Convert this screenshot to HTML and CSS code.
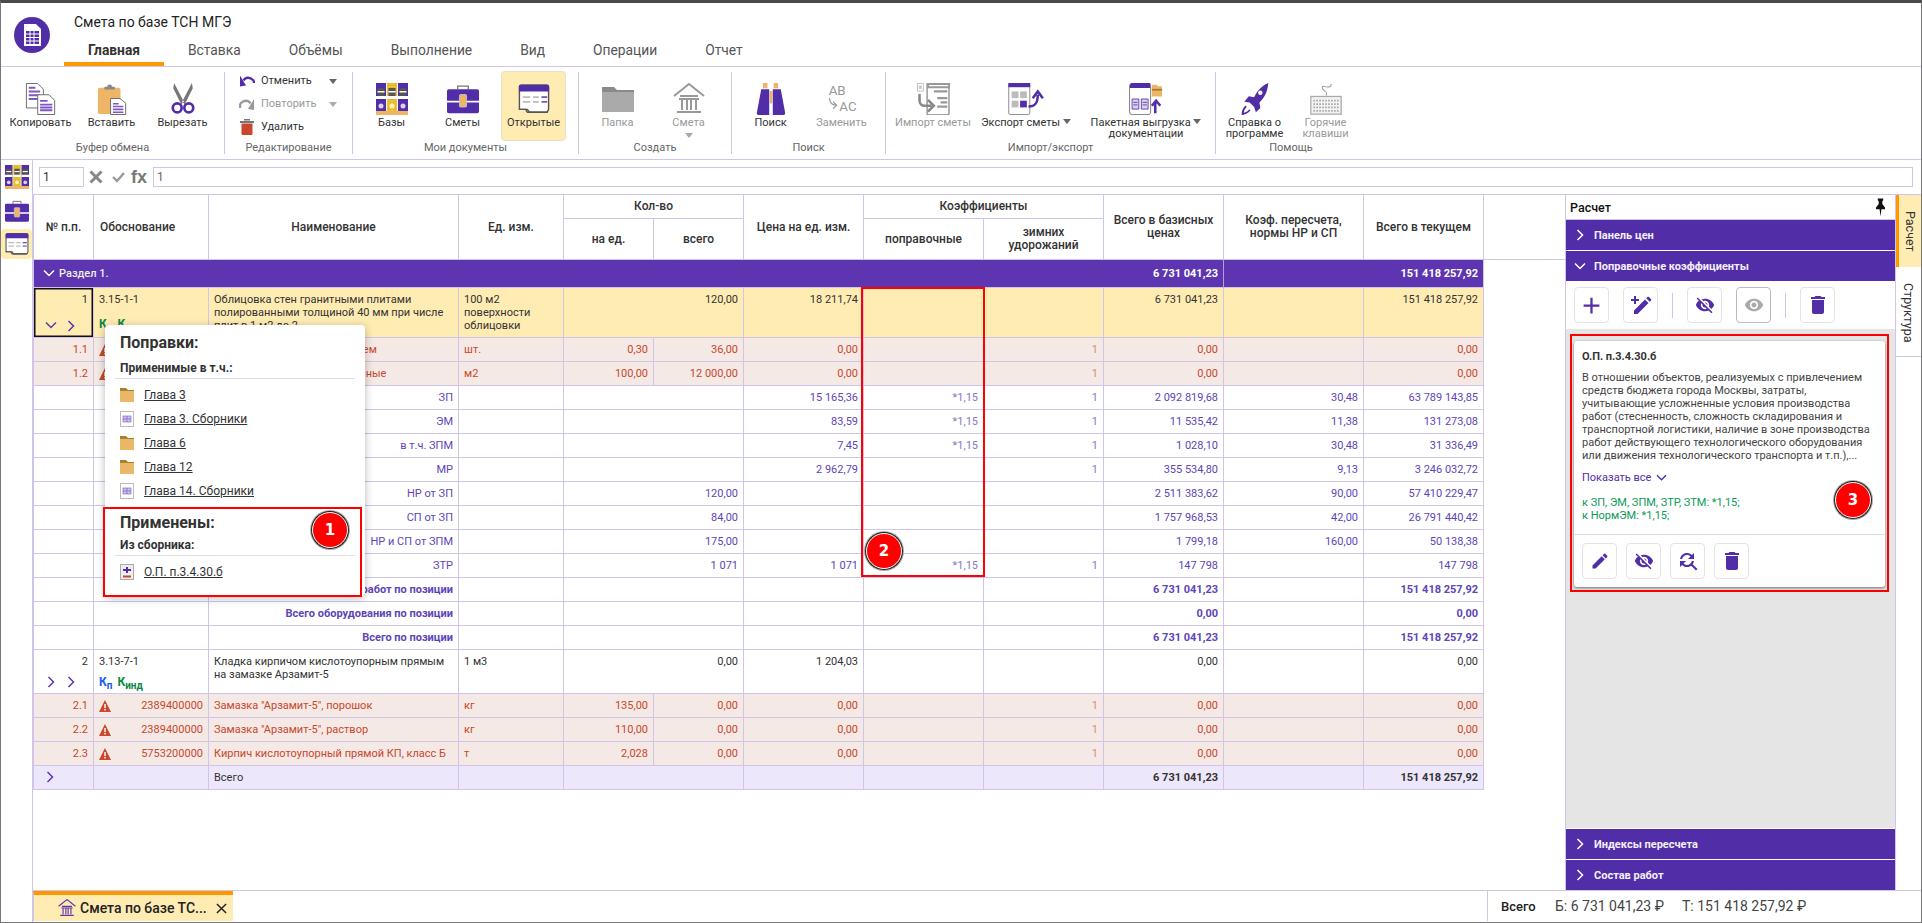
FILE: index.html
```html
<!DOCTYPE html>
<html lang="ru">
<head>
<meta charset="utf-8">
<title>Смета по базе ТСН МГЭ</title>
<link rel="stylesheet" href="styles.css">
</head>
<body>
<svg class="defs" width="0" height="0" aria-hidden="true">
  <symbol id="i-books" viewBox="0 0 32 32">
    <rect x="0" y="0" width="10" height="28" fill="#512da8"/><rect x="11" y="0" width="10" height="28" fill="#e9bd2c"/><rect x="22" y="0" width="10" height="28" fill="#512da8"/>
    <rect x="1.500" y="5" width="7" height="8" fill="#555"/><rect x="12.500" y="5" width="7" height="8" fill="#555"/><rect x="23.500" y="5" width="7" height="8" fill="#555"/>
    <rect x="1.500" y="8" width="7" height="1.500" fill="#fff"/><rect x="12.500" y="8" width="7" height="1.500" fill="#fff"/><rect x="23.500" y="8" width="7" height="1.500" fill="#fff"/>
    <rect x="0" y="13" width="10" height="3" fill="#fff"/><rect x="11" y="13" width="10" height="3" fill="#fff"/><rect x="22" y="13" width="10" height="3" fill="#fff"/>
    <circle cx="5" cy="23" r="2.500" fill="#d9d2ea"/><circle cx="16" cy="23" r="2.500" fill="#fff2c0"/><circle cx="27" cy="23" r="2.500" fill="#d9d2ea"/>
    <rect x="0" y="28" width="32" height="4" fill="#eeb566"/>
  </symbol>
  <symbol id="i-case" viewBox="0 0 36 32">
    <path d="M12 5V1.500h12V5" fill="none" stroke="#777" stroke-width="1.500"/>
    <path d="M2 5h32a2 2 0 0 1 2 2v11H0V7a2 2 0 0 1 2-2zM0 20h36v10a2 2 0 0 1-2 2H2a2 2 0 0 1-2-2z" fill="#512da8"/>
    <rect x="14" y="11" width="8" height="14" rx="1" fill="#eeb566" stroke="#c8c0e0"/>
  </symbol>
  <symbol id="i-open" viewBox="0 0 34 32">
    <path d="M1.500 27V3a2 2 0 0 1 2-2h27a2 2 0 0 1 2 2v24l-1.500 3H10l-2-3z" fill="#fff" stroke="#555" stroke-width="1.500"/>
    <path d="M1 3a2 2 0 0 1 2-2h28a2 2 0 0 1 2 2v5H1z" fill="#512da8"/>
    <path d="M5 14h8M16 14h6M25 14h6M5 19h8M16 19h6" stroke="#bbb" stroke-width="2"/><path d="M25 19h6M25 14h6" stroke="#7e57c2" stroke-width="2"/>
    <path d="M1 27h9l2 3h19" fill="none" stroke="#555" stroke-width="1.500"/>
  </symbol>
  <symbol id="i-copy" viewBox="0 0 32 34">
    <path d="M.500.500h12l6 6v20H.500z" fill="#fff" stroke="#666"/><path d="M3 5h7M3 9h12M3 13h12M3 17h12" stroke="#7e57c2" stroke-width="2"/>
    <path d="M12.500 12.500h12l6 6v15h-18z" fill="#fff" stroke="#666"/><path d="M15 19h8M15 23h13M15 26h13M15 29h13" stroke="#7e57c2" stroke-width="2"/>
  </symbol>
  <symbol id="i-paste" viewBox="0 0 30 34">
    <rect x="0" y="5" width="24" height="28" rx="2" fill="#eeb566"/><path d="M7 7V4h3a2.500 2.500 0 0 1 5 0h3v3z" fill="#888"/>
    <path d="M13.500 16.500h10l6 5v12h-16z" fill="#fff" stroke="#666"/><path d="M16 22h6M16 25h11M16 28h11M16 31h11" stroke="#7e57c2" stroke-width="1.700"/>
  </symbol>
  <symbol id="i-cut" viewBox="0 0 26 36">
    <path d="M3 0l11 21-3 3L2 6zM23 0L12 21l3 3 9-18z" fill="#777"/>
    <circle cx="6.500" cy="28" r="5" fill="none" stroke="#512da8" stroke-width="3"/><circle cx="19.500" cy="28" r="5" fill="none" stroke="#512da8" stroke-width="3"/>
  </symbol>
  <symbol id="i-undo" viewBox="0 0 16 16"><path d="M4.500 7.500C6.500 4 11 4 14 7c1 1 1 2 1 3" fill="none" stroke="currentColor" stroke-width="2.400"/><path d="M1 2.500v11l6-1z" fill="currentColor"/></symbol>
  <symbol id="i-redo" viewBox="0 0 16 16"><path d="M11.500 7.500C9.500 4 5 4 2 7c-1 1-1 2-1 3v2" fill="none" stroke="currentColor" stroke-width="2.400"/><path d="M15 3v11l-6-1z" fill="currentColor"/></symbol>
  <symbol id="i-bin" viewBox="0 0 14 16"><path d="M0 2h14v2H0zM4 0h6v1.500H4z" fill="#777"/><path d="M1.500 4.500h11V15a1 1 0 0 1-1 1h-9a1 1 0 0 1-1-1z" fill="#c9472c"/></symbol>
  <symbol id="i-folder" viewBox="0 0 32 32"><path d="M0 4h12l3 3h17v4H0z" fill="#8a8a8a"/><path d="M0 9h32v20H0z" fill="#aaa"/></symbol>
  <symbol id="i-house" viewBox="0 0 32 32" >
    <path d="M1 13L16 1l15 12" fill="none" stroke="currentColor" stroke-width="2"/><path d="M7 13h18M6 16h20M9 16v11M14 16v11M18 16v11M23 16v11M4 29h24" fill="none" stroke="currentColor" stroke-width="2"/>
  </symbol>
  <symbol id="i-binoc" viewBox="0 0 32 36">
    <rect x="7" y="0" width="5" height="6" fill="#eeb566"/><rect x="19" y="0" width="5" height="6" fill="#eeb566"/>
    <rect x="14.500" y="9" width="3" height="14" fill="#eeb566"/>
    <path d="M5 7h9v29H2a2 2 0 0 1-2-2zM18 7h9l5 27a2 2 0 0 1-2 2H18z" fill="#512da8"/>
  </symbol>
  <symbol id="i-import" viewBox="0 0 38 38">
    <rect x="0.500" y="0.500" width="7" height="9" fill="#fff" stroke="#bbb"/><rect x="2" y="3" width="4" height="4" fill="#ccc"/>
    <path d="M12 1h24a2 2 0 0 1 2 2v33a2 2 0 0 1-2 2H12z" fill="#fff" stroke="#888" stroke-width="1.500"/>
    <path d="M13 1h25v4H13zM20 10h16M24 18h12M28 23h8M24 28h12" stroke="#999" stroke-width="2.500" fill="none"/>
    <path d="M3 13v8a6 6 0 0 0 6 6h8M13 20l7 7-7 7" fill="none" stroke="#888" stroke-width="3"/>
  </symbol>
  <symbol id="i-export" viewBox="0 0 42 38">
    <rect x="0.500" y="0.500" width="25" height="37" rx="2" fill="#fff" stroke="#777"/><rect x="0" y="0" width="26" height="5" fill="#512da8"/>
    <rect x="4" y="10" width="8" height="8" fill="#bbb"/><rect x="14" y="10" width="8" height="8" fill="#bbb"/><rect x="4" y="21" width="8" height="8" fill="#bbb"/><rect x="14" y="21" width="8" height="8" fill="#512da8"/>
    <path d="M24 28c8 0 11-4 11-14M29 18l6-8 6 8" fill="none" stroke="#512da8" stroke-width="3"/>
  </symbol>
  <symbol id="i-batch" viewBox="0 0 40 38">
    <rect x="0.500" y="0.500" width="25" height="37" rx="3" fill="#fff" stroke="#666"/><path d="M1 3a3 3 0 0 1 3-3h21v6H1z" fill="#512da8"/>
    <path d="M3.500 19h8v12h-8zM14.500 19h8v12h-8z" fill="#d9d2ea" stroke="#512da8"/><path d="M5 23h5M5 26h5M16 23h5M16 26h5" stroke="#512da8"/>
    <path d="M27 2h6l1 2h5v12H27z" fill="#eeb566"/><rect x="27" y="7" width="12" height="2" fill="#9a7b3a"/>
    <path d="M31 36V23M27 27l5-6 5 6" fill="none" stroke="#512da8" stroke-width="3"/>
  </symbol>
  <symbol id="i-rocket" viewBox="0 0 32 36">
    <path d="M31 0c-1 9-3 15-10 22l1 6-5 5-2-6-5-5-6-1 5-6 6 1C19 8 24 3 31 0z" fill="#512da8"/>
    <circle cx="22" cy="11" r="2.500" fill="#fff"/><path d="M6 26c-2 2-4 4-4 9 3-1 7-2 8-5" fill="none" stroke="#512da8" stroke-width="2"/>
  </symbol>
  <symbol id="i-keys" viewBox="0 0 38 38">
    <path d="M25 1c1 5-5 4-9 3-3 0-1 4 2 6 2 1 2 3 1 5" fill="none" stroke="#999" stroke-width="1.200"/>
    <rect x="1" y="16" width="36" height="21" fill="#f3f3f3" stroke="#aaa" stroke-width="1.500"/>
    <path d="M4 21h30M4 25h30M4 29h30M4 33h30" stroke="#aaa" stroke-width="2" stroke-dasharray="2 1.500" fill="none"/>
  </symbol>
  <symbol id="i-warn" viewBox="0 0 12 12"><path d="M6 0l6 12H0z" fill="#c9472c"/><path d="M5.300 4h1.400v4.200H5.300zM5.300 9h1.400v1.400H5.300z" fill="#fff"/></symbol>
  <symbol id="i-yfolder" viewBox="0 0 14 14"><path d="M0 0h6l2 2h6v2H0z" fill="#a9812f"/><path d="M0 3h14v11H0z" fill="#e9b765"/></symbol>
  <symbol id="i-sheet" viewBox="0 0 14 16"><rect x=".5" y=".5" width="13" height="15" fill="#fff" stroke="#bbb"/><rect x="3" y="5" width="8" height="6" fill="#c9c0ea" stroke="#7e57c2" stroke-width=".6"/><path d="M3 8h8M7 5v6" stroke="#7e57c2" stroke-width=".6"/></symbol>
  <symbol id="i-plusminus" viewBox="0 0 14 16"><rect x=".5" y=".5" width="13" height="15" fill="#eee" stroke="#aaa"/><path d="M3 6h8M7 3v6" stroke="#512da8" stroke-width="2"/><path d="M3 12.500h8" stroke="#c9472c" stroke-width="2"/></symbol>
  <symbol id="m-add" viewBox="0 0 24 24"><path d="M19 13h-6v6h-2v-6H5v-2h6V5h2v6h6v2z"/></symbol>
  <symbol id="m-edit" viewBox="0 0 24 24"><path d="M3 17.250V21h3.750L17.810 9.940l-3.750-3.750L3 17.250zM20.710 7.040c.39-.39.39-1.020 0-1.410l-2.340-2.340c-.39-.39-1.020-.39-1.410 0l-1.830 1.830 3.750 3.750 1.830-1.830z"/></symbol>
  <symbol id="m-wand" viewBox="0 0 24 24"><path d="M5 21v-3.500L16 6.500 19.500 10 8.500 21zM20.700 8.800L17.200 5.300l1.300-1.300c.4-.4 1-.4 1.400 0l2.100 2.100c.4.4.4 1 0 1.400zM5 3h2v3h3v2H7v3H5V8H2V6h3z"/></symbol>
  <symbol id="m-del" viewBox="0 0 24 24"><path d="M6 19c0 1.100.9 2 2 2h8c1.100 0 2-.9 2-2V7H6v12zM19 4h-3.500l-1-1h-5l-1 1H5v2h14V4z"/></symbol>
  <symbol id="m-eye" viewBox="0 0 24 24"><path d="M12 4.500C7 4.500 2.730 7.610 1 12c1.730 4.390 6 7.500 11 7.500s9.270-3.110 11-7.500c-1.730-4.390-6-7.500-11-7.500zM12 17c-2.760 0-5-2.240-5-5s2.240-5 5-5 5 2.240 5 5-2.240 5-5 5zm0-8c-1.660 0-3 1.340-3 3s1.340 3 3 3 3-1.340 3-3-1.340-3-3-3z"/></symbol>
  <symbol id="m-eyeoff" viewBox="0 0 24 24"><path d="M12 7c2.760 0 5 2.240 5 5 0 .65-.13 1.260-.36 1.830l2.920 2.920c1.510-1.260 2.700-2.890 3.430-4.750-1.730-4.390-6-7.500-11-7.500-1.400 0-2.740.25-3.980.7l2.160 2.160C10.740 7.130 11.350 7 12 7zM2 4.270l2.280 2.280.46.46C3.080 8.300 1.780 10.020 1 12c1.730 4.390 6 7.500 11 7.500 1.550 0 3.030-.3 4.380-.84l.42.42L19.730 22 21 20.730 3.270 3 2 4.270zM7.530 9.800l1.550 1.550c-.05.21-.08.43-.08.65 0 1.660 1.340 3 3 3 .22 0 .44-.03.65-.08l1.550 1.550c-.67.33-1.410.53-2.200.53-2.760 0-5-2.240-5-5 0-.79.2-1.530.53-2.200zm4.310-.78l3.150 3.150.02-.16c0-1.660-1.340-3-3-3l-.17.01z"/></symbol>
  <symbol id="m-find" viewBox="0 0 24 24"><path d="M11 6c1.380 0 2.630.56 3.540 1.460L12 10h6V4l-2.050 2.050C14.680 4.780 12.930 4 11 4c-3.530 0-6.430 2.610-6.920 6H6.100c.46-2.280 2.480-4 4.900-4zm5.640 9.140c.66-.9 1.120-1.970 1.280-3.140H15.900c-.46 2.280-2.480 4-4.900 4-1.380 0-2.630-.56-3.540-1.460L10 12H4v6l2.050-2.050C7.320 17.220 9.070 18 11 18c1.550 0 2.980-.51 4.140-1.360L20 21.490 21.490 20l-4.850-4.860z"/></symbol>
  <symbol id="c-right" viewBox="0 0 10 12"><path d="M2.500 1l5 5-5 5" fill="none" stroke="currentColor" stroke-width="1.500"/></symbol>
  <symbol id="c-down" viewBox="0 0 12 10"><path d="M1 2.500l5 5 5-5" fill="none" stroke="currentColor" stroke-width="1.500"/></symbol>
</svg>

<div class="app">
  <header class="head">
    <div class="logo">
      <svg width="36" height="36" viewBox="0 0 36 36"><circle cx="18" cy="18" r="18" fill="#512da8"/><path d="M10 7h12l5 5v17H10z" fill="#fff"/><path d="M12 14h13v13H12z" fill="#512da8"/><path d="M12 17h13M12 20.500h13M12 24h13M16 14v13M20 14v13" stroke="#fff"/></svg>
    </div>
    <div class="head-main">
      <div class="doc-title">Смета по базе ТСН МГЭ</div>
      <nav class="tabs">
        <a class="tab tab-on">Главная</a><a class="tab">Вставка</a><a class="tab">Объёмы</a><a class="tab">Выполнение</a><a class="tab">Вид</a><a class="tab">Операции</a><a class="tab">Отчет</a>
      </nav>
    </div>
  </header>

  <section class="ribbon">
    <div class="grp g-clip">
      <div class="btns">
        <div class="btn"><svg class="ic"><use href="#i-copy"/></svg><span>Копировать</span></div>
        <div class="btn"><svg class="ic"><use href="#i-paste"/></svg><span>Вставить</span></div>
        <div class="btn"><svg class="ic"><use href="#i-cut"/></svg><span>Вырезать</span></div>
      </div>
      <div class="grp-label">Буфер обмена</div>
    </div>
    <div class="grp g-edit">
      <div class="rows">
        <div class="row-btn"><svg class="ic-s purple"><use href="#i-undo"/></svg><span>Отменить</span><i class="caret"></i></div>
        <div class="row-btn dim"><svg class="ic-s"><use href="#i-redo"/></svg><span>Повторить</span><i class="caret"></i></div>
        <div class="row-btn"><svg class="ic-s"><use href="#i-bin"/></svg><span>Удалить</span></div>
      </div>
      <div class="grp-label">Редактирование</div>
    </div>
    <div class="grp g-docs">
      <div class="btns">
        <div class="btn"><svg class="ic"><use href="#i-books"/></svg><span>Базы</span></div>
        <div class="btn"><svg class="ic"><use href="#i-case"/></svg><span>Сметы</span></div>
        <div class="btn btn-on"><svg class="ic"><use href="#i-open"/></svg><span>Открытые</span></div>
      </div>
      <div class="grp-label">Мои документы</div>
    </div>
    <div class="grp g-new">
      <div class="btns">
        <div class="btn dim"><svg class="ic"><use href="#i-folder"/></svg><span>Папка</span></div>
        <div class="btn dim"><svg class="ic house"><use href="#i-house"/></svg><span>Смета</span><i class="caret"></i></div>
      </div>
      <div class="grp-label">Создать</div>
    </div>
    <div class="grp g-find">
      <div class="btns">
        <div class="btn"><svg class="ic"><use href="#i-binoc"/></svg><span>Поиск</span></div>
        <div class="btn dim"><svg class="ic" viewBox="0 0 36 36"><text class="ab" x="3" y="14">AB</text><text class="ab" x="15" y="31">AC</text><path d="M4 17c0 5 2 8 8 8M8 21l4 4-4 4" fill="none" stroke="#999" stroke-width="1.300"/></svg><span>Заменить</span></div>
      </div>
      <div class="grp-label">Поиск</div>
    </div>
    <div class="grp g-io">
      <div class="btns">
        <div class="btn b-imp dim"><svg class="ic ic-wide"><use href="#i-import"/></svg><span>Импорт сметы</span></div>
        <div class="btn b-exp"><svg class="ic ic-wide"><use href="#i-export"/></svg><span>Экспорт сметы <i class="caret"></i></span></div>
        <div class="btn b-batch"><svg class="ic ic-wide"><use href="#i-batch"/></svg><span>Пакетная выгрузка <i class="caret"></i><br>документации</span></div>
      </div>
      <div class="grp-label">Импорт/экспорт</div>
    </div>
    <div class="grp g-help">
      <div class="btns">
        <div class="btn"><svg class="ic"><use href="#i-rocket"/></svg><span>Справка о<br>программе</span></div>
        <div class="btn dim"><svg class="ic"><use href="#i-keys"/></svg><span>Горячие<br>клавиши</span></div>
      </div>
      <div class="grp-label">Помощь</div>
    </div>
  </section>

  <div class="body">
    <aside class="rail">
      <svg class="rail-ic"><use href="#i-books"/></svg>
      <svg class="rail-ic"><use href="#i-case"/></svg>
      <div class="rail-on"><svg class="rail-ic"><use href="#i-open"/></svg></div>
    </aside>
    <div class="content">
      <div class="formula">
        <div class="f-name">1</div>
        <svg class="f-x" viewBox="0 0 14 14"><path d="M1.500 1.500l11 11M12.500 1.500l-11 11" stroke="#888" stroke-width="3"/></svg>
        <svg class="f-v" viewBox="0 0 14 14"><path d="M2 7l4 4 7-8" fill="none" stroke="#999" stroke-width="2.400"/></svg>
        <span class="f-fx">fx</span>
        <div class="f-val">1</div>
      </div>
      <div class="work">
        <div class="grid-wrap">
          <table class="grid">
            <colgroup>
              <col class="c61"><col class="c115"><col class="c250"><col class="c105"><col class="c90"><col class="c90"><col class="c120"><col class="c120"><col class="c120"><col class="c120"><col class="c140"><col class="c120">
            </colgroup>
            <thead>
              <tr class="h1">
                <th rowspan="2">№ п.п.</th><th rowspan="2" class="l">Обоснование</th><th rowspan="2">Наименование</th><th rowspan="2">Ед. изм.</th>
                <th colspan="2">Кол-во</th><th rowspan="2">Цена на ед. изм.</th><th colspan="2">Коэффициенты</th>
                <th rowspan="2">Всего в базисных ценах</th><th rowspan="2">Коэф. пересчета, нормы НР и СП</th><th rowspan="2">Всего в текущем</th>
              </tr>
              <tr class="h2"><th>на ед.</th><th>всего</th><th>поправочные</th><th>зимних удорожаний</th></tr>
            </thead>
            <tbody>
              <tr class="sec">
                <td colspan="9"><svg class="chev-d"><use href="#c-down"/></svg>Раздел 1.</td><td class="n">6 731 041,23</td><td class="n" colspan="2">151 418 257,92</td>
              </tr>
              <tr class="pos cur h50">
                <td class="sel n">1<div class="chevs"><svg class="chev-d"><use href="#c-down"/></svg><svg class="chev-r"><use href="#c-right"/></svg></div></td>
                <td>3.15-1-1<div class="ks"><b class="k-g">К<sub>п</sub></b><b class="k-g">К<sub>инд</sub></b></div></td>
                <td>Облицовка стен гранитными плитами полированными толщиной 40 мм при числе плит в 1 м2 до 2</td>
                <td>100 м2 поверхности облицовки</td><td class="n" colspan="2">120,00</td><td class="n">18 211,74</td><td></td><td></td><td class="n">6 731 041,23</td><td></td><td class="n">151 418 257,92</td>
              </tr>
              <tr class="res"><td class="n">1.1</td><td><div class="code"><svg class="warn"><use href="#i-warn"/></svg>1234500000</div></td><td>Анкер со стальным покрытием</td><td>шт.</td><td class="n">0,30</td><td class="n">36,00</td><td class="n">0,00</td><td></td><td class="n">1</td><td class="n">0,00</td><td></td><td class="n">0,00</td></tr>
              <tr class="res"><td class="n">1.2</td><td><div class="code"><svg class="warn"><use href="#i-warn"/></svg>1234500000</div></td><td>Плиты гранитные полированные</td><td>м2</td><td class="n">100,00</td><td class="n">12 000,00</td><td class="n">0,00</td><td></td><td class="n">1</td><td class="n">0,00</td><td></td><td class="n">0,00</td></tr>
              <tr class="sub"><td></td><td></td><td class="n">ЗП</td><td></td><td colspan="2"></td><td class="n">15 165,36</td><td class="n">*1,15</td><td class="n">1</td><td class="n">2 092 819,68</td><td class="n">30,48</td><td class="n">63 789 143,85</td></tr>
              <tr class="sub"><td></td><td></td><td class="n">ЭМ</td><td></td><td colspan="2"></td><td class="n">83,59</td><td class="n">*1,15</td><td class="n">1</td><td class="n">11 535,42</td><td class="n">11,38</td><td class="n">131 273,08</td></tr>
              <tr class="sub"><td></td><td></td><td class="n">в т.ч. ЗПМ</td><td></td><td colspan="2"></td><td class="n">7,45</td><td class="n">*1,15</td><td class="n">1</td><td class="n">1 028,10</td><td class="n">30,48</td><td class="n">31 336,49</td></tr>
              <tr class="sub"><td></td><td></td><td class="n">МР</td><td></td><td colspan="2"></td><td class="n">2 962,79</td><td></td><td class="n">1</td><td class="n">355 534,80</td><td class="n">9,13</td><td class="n">3 246 032,72</td></tr>
              <tr class="sub"><td></td><td></td><td class="n">НР от ЗП</td><td></td><td class="n" colspan="2">120,00</td><td></td><td></td><td></td><td class="n">2 511 383,62</td><td class="n">90,00</td><td class="n">57 410 229,47</td></tr>
              <tr class="sub"><td></td><td></td><td class="n">СП от ЗП</td><td></td><td class="n" colspan="2">84,00</td><td></td><td></td><td></td><td class="n">1 757 968,53</td><td class="n">42,00</td><td class="n">26 791 440,42</td></tr>
              <tr class="sub"><td></td><td></td><td class="n">НР и СП от ЗПМ</td><td></td><td class="n" colspan="2">175,00</td><td></td><td></td><td></td><td class="n">1 799,18</td><td class="n">160,00</td><td class="n">50 138,38</td></tr>
              <tr class="sub"><td></td><td></td><td class="n">ЗТР</td><td></td><td class="n" colspan="2">1 071</td><td class="n">1 071</td><td class="n">*1,15</td><td class="n">1</td><td class="n">147 798</td><td></td><td class="n">147 798</td></tr>
              <tr class="sub strong"><td></td><td></td><td class="n">Всего работ по позиции</td><td></td><td colspan="2"></td><td></td><td></td><td></td><td class="n">6 731 041,23</td><td></td><td class="n">151 418 257,92</td></tr>
              <tr class="sub strong"><td></td><td></td><td class="n">Всего оборудования по позиции</td><td></td><td colspan="2"></td><td></td><td></td><td></td><td class="n">0,00</td><td></td><td class="n">0,00</td></tr>
              <tr class="sub strong"><td></td><td></td><td class="n">Всего по позиции</td><td></td><td colspan="2"></td><td></td><td></td><td></td><td class="n">6 731 041,23</td><td></td><td class="n">151 418 257,92</td></tr>
              <tr class="pos h44">
                <td class="n">2<div class="chevs"><svg class="chev-r"><use href="#c-right"/></svg><svg class="chev-r"><use href="#c-right"/></svg></div></td>
                <td>3.13-7-1<div class="ks"><b class="k-b">К<sub>п</sub></b><b class="k-g">К<sub>инд</sub></b></div></td>
                <td>Кладка кирпичом кислотоупорным прямым на замазке Арзамит-5</td><td>1 м3</td><td class="n" colspan="2">0,00</td><td class="n">1 204,03</td><td></td><td></td><td class="n">0,00</td><td></td><td class="n">0,00</td>
              </tr>
              <tr class="res"><td class="n">2.1</td><td><div class="code"><svg class="warn"><use href="#i-warn"/></svg>2389400000</div></td><td>Замазка "Арзамит-5", порошок</td><td>кг</td><td class="n">135,00</td><td class="n">0,00</td><td class="n">0,00</td><td></td><td class="n">1</td><td class="n">0,00</td><td></td><td class="n">0,00</td></tr>
              <tr class="res"><td class="n">2.2</td><td><div class="code"><svg class="warn"><use href="#i-warn"/></svg>2389400000</div></td><td>Замазка "Арзамит-5", раствор</td><td>кг</td><td class="n">110,00</td><td class="n">0,00</td><td class="n">0,00</td><td></td><td class="n">1</td><td class="n">0,00</td><td></td><td class="n">0,00</td></tr>
              <tr class="res"><td class="n">2.3</td><td><div class="code"><svg class="warn"><use href="#i-warn"/></svg>5753200000</div></td><td>Кирпич кислотоупорный прямой КП, класс Б</td><td>т</td><td class="n">2,028</td><td class="n">0,00</td><td class="n">0,00</td><td></td><td class="n">1</td><td class="n">0,00</td><td></td><td class="n">0,00</td></tr>
              <tr class="tot">
                <td><svg class="chev-r tot-chev"><use href="#c-right"/></svg></td><td></td><td>Всего</td><td></td><td colspan="2"></td><td></td><td></td><td></td><td class="n b">6 731 041,23</td><td></td><td class="n b">151 418 257,92</td>
              </tr>
            </tbody>
          </table>
          <div class="grid-tail"></div>
        </div>

        <aside class="panel">
          <div class="panel-title"><span>Расчет</span>
            <svg class="pin" viewBox="0 0 10 20"><path d="M2 0h6v2L7 3v3l3 4v2H6l-1 8-1-8H0v-2l3-4V3L2 2z" fill="#111"/></svg>
          </div>
          <div class="acc"><svg class="acc-c"><use href="#c-right"/></svg>Панель цен</div>
          <div class="acc"><svg class="acc-c"><use href="#c-down"/></svg>Поправочные коэффициенты</div>
          <div class="tools">
            <div class="sq sq-lg"><svg><use href="#m-add"/></svg></div>
            <div class="sq"><svg><use href="#m-wand"/></svg></div>
            <i class="tool-sep"></i>
            <div class="sq sq-sm"><svg><use href="#m-eyeoff"/></svg></div>
            <div class="sq sq-on sq-sm"><svg><use href="#m-eye"/></svg></div>
            <i class="tool-sep"></i>
            <div class="sq"><svg><use href="#m-del"/></svg></div>
          </div>
          <div class="panel-body">
            <div class="mark-card">
              <article class="card">
                <div class="card-main">
                  <div class="card-title">О.П. п.3.4.30.б</div>
                  <p class="card-text">В отношении объектов, реализуемых с привлечением средств бюджета города Москвы, затраты, учитывающие усложненные условия производства работ (стесненность, сложность складирования и транспортной логистики, наличие в зоне производства работ действующего технологического оборудования или движения технологического транспорта и т.п.),...</p>
                  <div class="show-all">Показать все <svg class="show-c"><use href="#c-down"/></svg></div>
                  <div class="card-k">к ЗП, ЭМ, ЗПМ, ЗТР, ЗТМ: *1,15;<br>к НормЭМ: *1,15;</div>
                </div>
                <div class="card-acts">
                  <div class="sq sq-sm"><svg><use href="#m-edit"/></svg></div>
                  <div class="sq sq-sm"><svg><use href="#m-eyeoff"/></svg></div>
                  <div class="sq"><svg><use href="#m-find"/></svg></div>
                  <div class="sq"><svg><use href="#m-del"/></svg></div>
                </div>
              </article>
              <span class="badge badge-3">3</span>
            </div>
          </div>
          <div class="acc acc-gap"><svg class="acc-c"><use href="#c-right"/></svg>Индексы пересчета</div>
          <div class="acc acc-last"><svg class="acc-c"><use href="#c-right"/></svg>Состав работ</div>
        </aside>

        <div class="vtabs">
          <div class="vtab vtab-on"><span>Расчет</span></div>
          <div class="vtab"><span>Структура</span></div>
        </div>

        <div class="popup">
          <div class="pop-h">Поправки:</div>
          <div class="pop-sub">Применимые в т.ч.:</div>
          <ul class="pop-list">
            <li><svg class="pop-ic"><use href="#i-yfolder"/></svg><a>Глава 3</a></li>
            <li><svg class="pop-ic"><use href="#i-sheet"/></svg><a>Глава 3. Сборники</a></li>
            <li><svg class="pop-ic"><use href="#i-yfolder"/></svg><a>Глава 6</a></li>
            <li><svg class="pop-ic"><use href="#i-yfolder"/></svg><a>Глава 12</a></li>
            <li><svg class="pop-ic"><use href="#i-sheet"/></svg><a>Глава 14. Сборники</a></li>
          </ul>
          <div class="pop-h pop-h2">Применены:</div>
          <div class="pop-sub pop-sub2">Из сборника:</div>
          <ul class="pop-list">
            <li><svg class="pop-ic"><use href="#i-plusminus"/></svg><a>О.П. п.3.4.30.б</a></li>
          </ul>
        </div>
        <div class="mark mark-1"></div>
        <span class="badge badge-1">1</span>
        <div class="mark mark-2"></div>
        <span class="badge badge-2">2</span>
      </div>
      <footer class="foot">
        <div class="doc-tab">
          <svg class="doc-ic"><use href="#i-house"/></svg>
          <span>Смета по базе ТС...</span>
          <svg class="doc-x" viewBox="0 0 12 12"><path d="M1 1l10 10M11 1L1 11" stroke="#222" stroke-width="1.600"/></svg>
        </div>
        <div class="totals"><b>Всего</b><span class="t-b">Б: 6 731 041,23 ₽</span><span class="t-t">Т: 151 418 257,92 ₽</span></div>
      </footer>
    </div>
  </div>
</div>
</body>
</html>
```

FILE: styles.css
```css
* { box-sizing: border-box; }
html, body { margin: 0; height: 100%; overflow: hidden; background: #fff; }
body { font-family: Roboto, "Liberation Sans", sans-serif; font-size: 11px; color: #333; }
.defs { position: absolute; }
.app { width: 1922px; height: 923px; border: 1px solid #777; border-top: 3px solid #4a4a4a; display: flex; flex-direction: column; }

/* header */
.head { height: 63px; display: flex; flex: none; }
.logo { width: 63px; padding-top: 14px; padding-left: 13px; flex: none; }
.head-main { display: flex; flex-direction: column; }
.doc-title { padding: 12px 0 0 10px; font-size: 14px; line-height: 15px; color: #222; height: 32px; }
.tabs { display: flex; height: 31px; }
.tab { padding: 6px 24px 0; font-size: 13.800px; line-height: 18px; color: #555; border-bottom: 4px solid transparent; }
.tab-on { font-weight: 700; color: #333; border-bottom-color: #ff9800; }

/* ribbon */
.ribbon { height: 94px; flex: none; display: flex; border-top: 1px solid #d1c4e9; border-bottom: 1px solid #d1c4e9; padding: 5px 0 6px; }
.grp { height: 82px; border-right: 1px solid #d1c4e9; display: flex; flex-direction: column; flex: none; position: relative; }
.grp-label { position: absolute; left: 0; right: 0; bottom: 0; line-height: 13px; text-align: center; color: #666; }
.btns { display: flex; }
.btn { width: 71px; margin-top: -1px; height: 70px; padding-top: 11px; display: flex; flex-direction: column; align-items: center; text-align: center; line-height: 11px; color: #333; flex: none; border: 1px solid transparent; border-radius: 4px; }
.btn > span { margin-top: 2px; white-space: nowrap; }
.btn-on { background: #ffecb3; border-color: #e9dfc4; width: 65px; margin-left: 3px; }
.dim { color: #999; }
.ic { width: 32px; height: 32px; flex: none; }
.ic-wide { width: 38px; }
.house { color: #999; }
.ab { font-size: 15px; fill: #999; font-family: Roboto, sans-serif; }
.caret { display: inline-block; width: 0; height: 0; border: 4.500px solid transparent; border-top: 5px solid #666; border-bottom: 0; vertical-align: 2px; }
.dim .caret { border-top-color: #aaa; }
.btn > .caret { margin-top: 5px; }
.g-clip { width: 224px; padding-left: 4px; }
.g-edit { width: 128px; padding-left: 14px; }
.g-docs { width: 226px; padding-left: 3px; }
.g-new { width: 153px; padding-left: 3px; }
.g-find { width: 154px; padding-left: 3px; }
.g-io { width: 330px; padding-left: 3px; }
.b-imp { width: 88px; }
.b-exp { width: 98px; }
.b-batch { width: 130px; margin-left: 6px; }
.g-help { width: 150px; padding-left: 3px; border-right: 0; }
.rows { display: flex; flex-direction: column; gap: 5px; width: 98px; }
.row-btn { height: 18px; display: flex; align-items: center; line-height: 18px; }
.row-btn > span { flex: 1; }
.ic-s { width: 16px; height: 16px; margin-right: 6px; flex: none; }
.purple { color: #512da8; }
.dim .ic-s { color: #999; }

/* body */
.body { flex: 1; display: flex; min-height: 0; }
.rail { width: 32px; flex: none; border-right: 1px solid #d1c4e9; display: flex; flex-direction: column; align-items: center; padding-top: 4px; gap: 8px; }
.rail-ic { width: 24px; height: 26px; display: block; }
.rail-on { width: 31px; height: 30px; background: #ffecb3; border-radius: 4px; display: flex; align-items: center; justify-content: center; margin-top: -3px; }
.content { flex: 1; display: flex; flex-direction: column; min-width: 0; }

/* formula */
.formula { height: 35px; flex: none; display: flex; align-items: center; border-bottom: 1px solid #d1c4e9; padding: 0 8px 1px 6px; font-size: 12px; }
.f-name { width: 45px; height: 20px; border: 1px solid #d1c4e9; line-height: 18px; padding-left: 3px; color: #333; }
.f-x { width: 14px; height: 14px; margin-left: 5px; }
.f-v { width: 14px; height: 14px; margin-left: 8px; }
.f-fx { font-size: 18px; font-weight: 700; color: #777; margin-left: 6px; width: 22px; line-height: 20px; font-family: "Liberation Sans", sans-serif; }
.f-val { flex: 1; height: 20px; border: 1px solid #d1c4e9; line-height: 18px; padding-left: 3px; color: #666; }

/* work */
.work { flex: 1; display: flex; position: relative; min-height: 0; }
.grid-wrap { flex: 1; display: flex; align-items: flex-start; min-width: 0; }
.grid { border-collapse: separate; border-spacing: 0; table-layout: fixed; width: 1451px; flex: none; line-height: 13px; }
.grid-tail { flex: 1; height: 65px; border-bottom: 1px solid #d1c4e9; }
.c61 { width: 61px; } .c115 { width: 115px; } .c250 { width: 250px; } .c105 { width: 105px; } .c90 { width: 90px; } .c120 { width: 120px; } .c140 { width: 140px; }
.grid th, .grid td { border-right: 1px solid #d1c4e9; border-bottom: 1px solid #d1c4e9; }
.grid tr > :first-child { border-left: 1px solid #d1c4e9; }
.grid thead tr:last-child th:first-child { border-left: 0; }
.grid th { font-size: 12px; font-weight: 500; color: #333; text-align: center; padding: 0 6px; vertical-align: middle; }
.grid th.l { text-align: left; }
.h1 { height: 24px; } .h2 { height: 41px; }
.grid td { padding: 5px 5px 0; vertical-align: top; height: 24px; overflow: hidden; }
.n { text-align: right; }
.b { font-weight: 700; }
.grid .sec { height: 28px; }
.sec td { background: #5e35b1; color: #fff; font-weight: 700; vertical-align: middle; padding-top: 0; border-right-color: #b39ddb; border-bottom-color: #d1c4e9; height: 28px; }
.sec td:first-child { border-right: 0; color: #eee; font-weight: 500; padding-left: 9px; }
.sec td:last-child { border-right-color: #d1c4e9; }
.chev-d { width: 12px; height: 10px; color: #fff; margin-right: 4px; vertical-align: -1px; }
.pos .chev-d { color: #5e35b1; margin-right: 0; }
.chev-r { width: 10px; height: 12px; color: #5e35b1; }
.cur td { background: #ffecb3; }
.grid .h50 { height: 50px; }
.grid .h44 { height: 44px; }
.h50 td { height: 50px; }
.h44 td { height: 44px; }
.grid td.sel { box-shadow: inset 0 0 0 1.500px #111; }
.chevs { display: flex; justify-content: space-between; padding: 0 12px 0 6px; margin-top: 14px; text-align: left; }
.h44 .chevs { margin-top: 8px; padding: 0 12px 0 7px; }
.ks { display: flex; gap: 5px; margin-top: 8px; font-size: 12px; line-height: 13px; }
.h50 .ks { margin-top: 12px; }
.ks sub { font-size: 10px; line-height: 0; }
.k-g { color: #0a8a43; }
.k-b { color: #1a5cf0; }
.res td { background: #f5e9e5; color: #c9472c; }
.res td:nth-last-child(4) { color: #d98a78; }
.code { display: flex; justify-content: space-between; align-items: center; }
.warn { width: 12px; height: 12px; flex: none; }
.sub td { color: #5e45b8; }
.sub td:nth-last-child(4), .sub td:nth-last-child(5) { color: #8a78cc; }
.strong td { font-weight: 700; }
.pos td { color: #333; }
.tot td { background: #ede7fb; color: #333; }
.tot-chev { margin-left: 6px; display: block; }

/* panel */
.panel { width: 331px; flex: none; border-left: 1px solid #d1c4e9; border-right: 1px solid #d1c4e9; display: flex; flex-direction: column; }
.panel-title { height: 25px; border-bottom: 1px solid #d1c4e9; display: flex; justify-content: space-between; align-items: center; padding: 0 10px 0 4px; font-size: 12.500px; font-weight: 500; color: #111; }
.pin { width: 9px; height: 19px; }
.acc { height: 30px; margin-bottom: 1px; background: #512da8; color: #f4f0fb; font-weight: 700; font-size: 11px; display: flex; align-items: center; flex: none; }
.acc-c { width: 12px; height: 12px; color: #fff; margin: 0 8px 0 8px; flex: none; }
.acc:nth-of-type(3) { margin-bottom: 0; }
.acc-gap { margin-top: 1px; }
.acc-last { margin-bottom: 0; }
.tools { height: 48px; flex: none; display: flex; align-items: center; gap: 14px; padding-left: 8px; }
.tool-sep { width: 1px; height: 25px; background: #d1c4e9; }
.sq { width: 35px; height: 36px; border: 1px solid #e3e3e3; border-radius: 4px; display: flex; align-items: center; justify-content: center; fill: #512da8; flex: none; }
.sq svg { width: 24px; height: 24px; }
.sq-sm svg { width: 20px; height: 20px; }
.sq-lg svg { width: 27px; height: 27px; }
.sq-on { border-color: #bbb; fill: #aaa; }
.panel-body { flex: 1; background: #e5e5e5; padding: 5px 6px 0 4px; min-height: 0; }
.mark-card { border: 2px solid #f00; padding: 5px 2px 3px; position: relative; }
.card { background: #fff; border-radius: 3px; box-shadow: 0 1px 3px rgba(0,0,0,.55); }
.card-main { padding: 9px 8px 12px; line-height: 13px; }
.card-title { font-weight: 700; color: #333; }
.card-text { margin: 8px 0 0; color: #444; }
.show-all { margin-top: 9px; color: #512da8; display: flex; align-items: center; gap: 5px; }
.show-c { width: 11px; height: 9px; color: #512da8; }
.card-k { margin-top: 12px; color: #0a9a55; }
.card-acts { border-top: 1px solid #ddd; padding: 8px; display: flex; gap: 9px; }

.vtabs { width: 25px; flex: none; display: flex; flex-direction: column; }
.vtab { height: 90px; border-bottom: 1px solid #d1c4e9; writing-mode: vertical-rl; display: flex; align-items: center; justify-content: flex-start; padding-top: 16px; font-size: 12.500px; color: #333; }
.vtab-on { height: 72px; background: #ffecb3; border-left: 3px solid #ff9800; border-bottom: 0; }

/* popup + annotations */
.popup { position: absolute; left: 72px; top: 130px; width: 260px; height: 271px; background: #fff; border-radius: 4px; box-shadow: 0 2px 8px rgba(0,0,0,.28); padding: 7px 10px 0; font-size: 12px; }
.pop-h { font-size: 16px; font-weight: 700; line-height: 22px; padding-left: 5px; color: #333; }
.pop-h2 { margin-top: 9px; }
.pop-sub { margin-top: 6px; font-size: 12px; font-weight: 700; line-height: 16px; padding: 0 0 2px 5px; border-bottom: 1px solid #ddd; color: #333; }
.pop-sub2 { margin-top: 3px; }
.pop-list { list-style: none; margin: 4px 0 0; padding: 0 0 0 5px; }
.pop-list li { height: 24px; display: flex; align-items: center; gap: 10px; }
.pop-list a { text-decoration: underline; color: #333; }
.pop-ic { width: 14px; height: 16px; flex: none; }
.mark { position: absolute; border: 2px solid #f00; pointer-events: none; }
.mark-1 { left: 70px; top: 312px; width: 259px; height: 90px; }
.mark-2 { left: 828px; top: 92px; width: 124px; height: 290px; }
.badge { position: absolute; width: 36px; height: 36px; border-radius: 50%; background: #f00; color: #fff; border: 1px solid #fff; box-shadow: 0 0 0 1px #222, 0 0 0 2px #aaa; font: 700 15px/34px "DejaVu Sans", sans-serif; text-align: center; }
.badge-1 { left: 279px; top: 317px; }
.badge-2 { left: 833px; top: 338px; }
.badge-3 { left: 263px; top: 146px; }

/* footer */
.foot { height: 32px; flex: none; border-top: 1px solid #d1c4e9; display: flex; justify-content: space-between; padding-bottom: 1px; }
.doc-tab { width: 200px; background: #ffecb3; border-top: 4px solid #ff9800; border-left: 1px solid #d1c4e9; display: flex; align-items: center; padding-left: 24px; font-size: 14px; font-weight: 500; color: #222; white-space: nowrap; }
.doc-ic { width: 18px; height: 18px; color: #5e35b1; margin-right: 4px; flex: none; }
.doc-x { width: 11px; height: 11px; margin-left: 9px; flex: none; }
.totals { width: 434px; border-left: 1px solid #d1c4e9; display: flex; align-items: center; padding-left: 13px; font-size: 14px; color: #444; }
.totals b { font-size: 13px; font-weight: 500; color: #222; width: 54px; }
.t-b { width: 127px; }
```
